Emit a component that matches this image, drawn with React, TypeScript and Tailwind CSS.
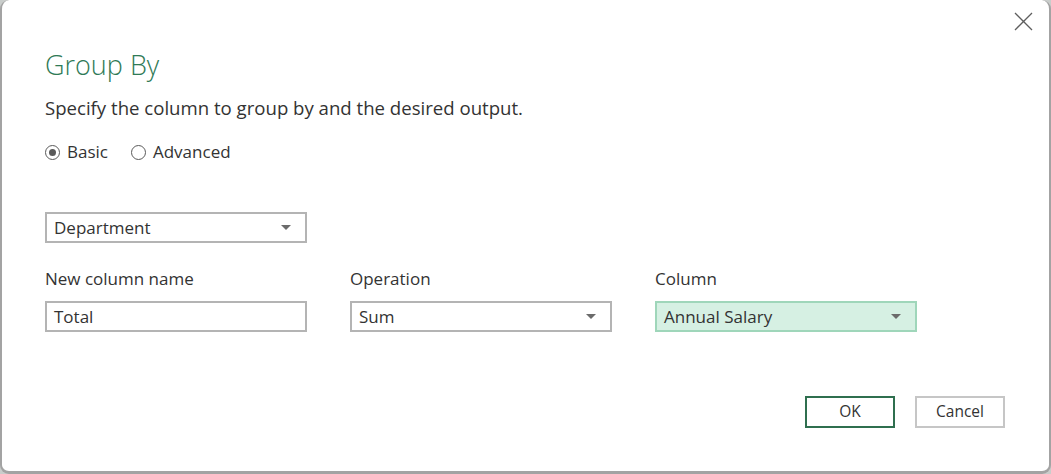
import type { ReactNode } from 'react';

const Caret = () => (
    <svg width="10" height="6" viewBox="0 0 10 6" className="shrink-0">
        <path d="M0 0 L10 0 L5 5 Z" fill="#6b6b6b" />
    </svg>
);

const Select = ({ value, active = false }: { value: string; active?: boolean }) => (
    <div
        className={
            active
                ? 'w-full h-[31px] border-2 border-[#9fd6ba] bg-[#d6f0e3] flex items-center justify-between pl-[7px] pr-[14px]'
                : 'w-full h-[31px] border-2 border-[#b4b4b4] bg-white flex items-center justify-between pl-[7px] pr-[14px]'
        }
    >
        <span className="text-[17px] text-[#333333] leading-none">{value}</span>
        <Caret />
    </div>
);

const Field = ({ label, children }: { label: string; children: ReactNode }) => (
    <div className="w-[262px] flex flex-col">
        <span className="text-[17px] text-[#333333] leading-none h-[24px] mb-[11px] flex items-center">{label}</span>
        {children}
    </div>
);

export default function App() {
    return (
        <div className="w-[1051px] h-[474px] bg-[#c9cdcb] overflow-hidden" style={{ fontFamily: '"Open Sans", "Noto Sans", sans-serif' }}>
            <div className="relative w-full h-full bg-white rounded-[9px] border-x-2 border-b-[3px] border-[#a3a3a3] border-t-0">
                {/* close */}
                <button className="absolute right-[16px] top-[12px]">
                    <svg width="19" height="19" viewBox="0 0 19 19">
                        <path d="M1 1 L18 18 M18 1 L1 18" stroke="#5e5e5e" strokeWidth="1.3" fill="none" />
                    </svg>
                </button>

                <div className="pl-[43px] pt-[45px] pr-[40px]">
                    <h1 className="text-[27px] font-light text-[#2f7a56] leading-none h-[38px] flex items-center">Group By</h1>
                    <p className="mt-[14px] text-[18.6px] text-[#333333] leading-none h-[22px] flex items-center">
                        Specify the column to group by and the desired output.
                    </p>

                    <div className="mt-[21px] flex items-center gap-[23px] text-[17px] text-[#333333] h-[24px]">
                        <label className="flex items-center gap-[7px]">
                            <span className="w-[15px] h-[15px] rounded-full border border-[#5a5a5a] flex items-center justify-center">
                                <span className="w-[7px] h-[7px] rounded-full bg-[#5a5a5a]" />
                            </span>
                            Basic
                        </label>
                        <label className="flex items-center gap-[7px]">
                            <span className="w-[15px] h-[15px] rounded-full border border-[#5a5a5a]" />
                            Advanced
                        </label>
                    </div>

                    <div className="mt-[48px] w-[262px]">
                        <Select value="Department" />
                    </div>

                    <div className="mt-[23px] flex gap-[43px]">
                        <Field label="New column name">
                            <div className="w-full h-[31px] border-2 border-[#b4b4b4] bg-white flex items-center pl-[7px]">
                                <span className="text-[17px] text-[#333333] leading-none">Total</span>
                            </div>
                        </Field>
                        <Field label="Operation">
                            <Select value="Sum" />
                        </Field>
                        <Field label="Column">
                            <Select value="Annual Salary" active />
                        </Field>
                    </div>

                    <div className="mt-[64px] flex justify-end gap-[20px] pr-[4px]">
                        <button className="w-[90px] h-[32px] border-2 border-[#2f6f4f] text-[15.5px] text-[#333333] bg-white">OK</button>
                        <button className="w-[90px] h-[32px] border-2 border-[#c6c6c6] text-[15.5px] text-[#333333] bg-white">Cancel</button>
                    </div>
                </div>
            </div>
        </div>
    );
}
